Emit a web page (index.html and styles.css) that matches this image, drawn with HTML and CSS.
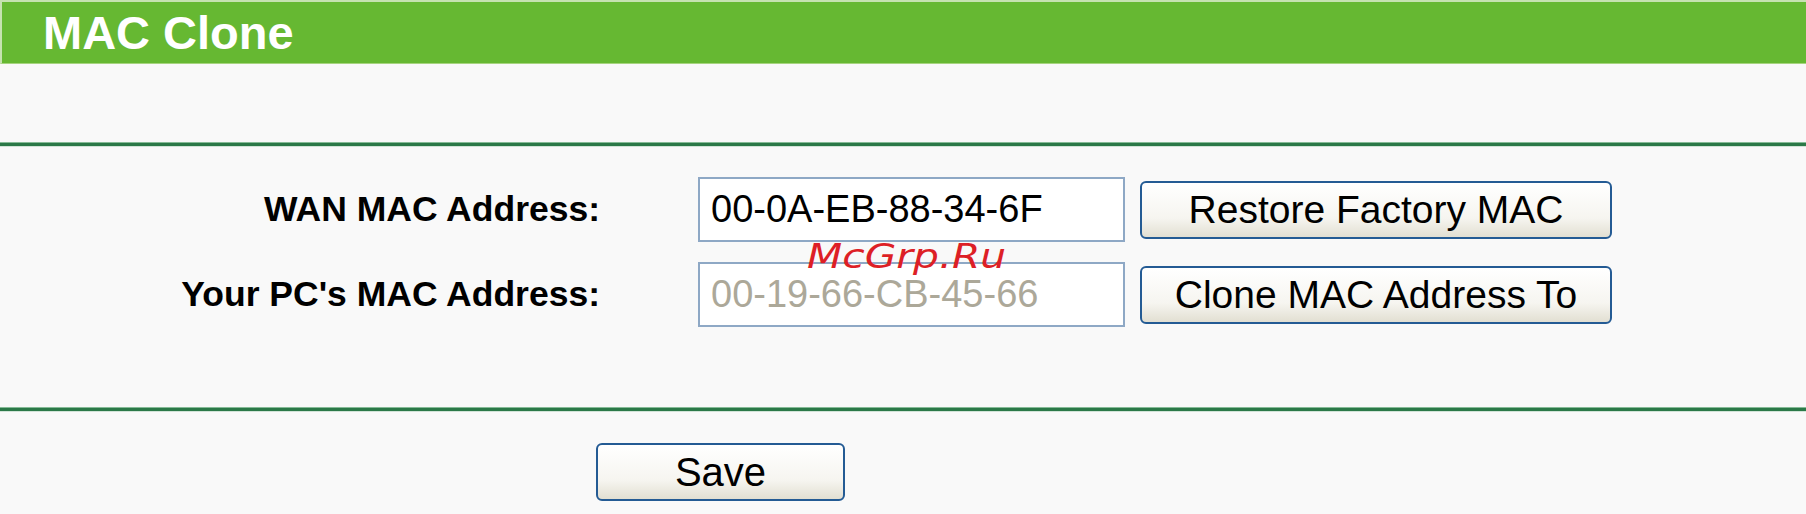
FILE: index.html
```html
<!DOCTYPE html>
<html lang="en">
<head>
    <meta charset="UTF-8">
    <meta name="viewport" content="width=device-width, initial-scale=1.0">
    <title>MAC Clone</title>
    <link rel="stylesheet" href="styles.css">
</head>
<body>
    <div class="title-bar">
        <h1>MAC Clone</h1>
    </div>
    <div class="spacer"></div>
    <hr class="rule">

    <form class="clone-form" onsubmit="event.preventDefault();">
        <div class="row">
            <label for="wan-mac">WAN MAC Address:</label>
            <input type="text" id="wan-mac" class="mac" value="00-0A-EB-88-34-6F">
            <button type="button" class="btn wide">Restore Factory MAC</button>
        </div>
        <div class="row">
            <label for="pc-mac">Your PC's MAC Address:</label>
            <input type="text" id="pc-mac" class="mac readonly" value="00-19-66-CB-45-66" readonly>
            <button type="button" class="btn wide">Clone MAC Address To</button>
        </div>
    </form>

    <hr class="rule">
    <div class="actions">
        <button type="submit" class="btn save">Save</button>
    </div>

    <div class="watermark">McGrp.Ru</div>
</body>
</html>
```

FILE: styles.css
```css
body {
    font-family: "Liberation Sans", Arial, sans-serif;
    background-color: #f9f9f9;
    margin: 0;
    padding: 0;
    position: relative;
    overflow: hidden;
}

.title-bar {
    height: 61px;
    background-color: #66b832;
    border-top: 2px solid #c6e2b0;
    border-left: 2px solid #c6e2b0;
    border-bottom: 1px solid #a6d47f;
    padding-left: 41px;
}

.title-bar h1 {
    margin: 0;
    font-size: 47px;
    line-height: 61px;
    font-weight: bold;
    color: #fff;
}

.spacer {
    height: 78px;
}

.rule {
    margin: 0;
    border: 0;
    height: 3px;
    background-color: #2b7948;
    border-top: 1px solid #86bb97;
    border-bottom: 1px solid #d2e4d8;
}

.clone-form {
    padding-top: 30px;
    padding-bottom: 80px;
    display: flex;
    flex-direction: column;
    gap: 20px;
}

.row {
    display: flex;
    align-items: center;
}

.row label {
    width: 600px;
    text-align: right;
    font-size: 35.5px;
    font-weight: bold;
    color: #000;
}

.mac {
    box-sizing: border-box;
    width: 427px;
    height: 65px;
    margin-left: 98px;
    padding: 0 0 0 11px;
    border: 2px solid #8ea8c5;
    background-color: #fff;
    font-family: "Liberation Sans", Arial, sans-serif;
    font-size: 38px;
    color: #000;
    outline: none;
}

.mac.readonly {
    color: #aca899;
}

.btn {
    box-sizing: border-box;
    height: 58px;
    border: 2px solid #245b94;
    border-radius: 6px;
    background: linear-gradient(#ffffff, #f6f5f0 65%, #e2dfd2);
    font-family: "Liberation Sans", Arial, sans-serif;
    font-size: 39px;
    color: #000;
    padding: 0;
    cursor: pointer;
}

.wide {
    width: 472px;
    margin-left: 15px;
}

.actions {
    padding-top: 31px;
    padding-left: 596px;
}

.save {
    width: 249px;
    font-size: 40px;
}

.watermark {
    position: absolute;
    left: 807px;
    top: 239px;
    font-family: "DejaVu Sans", sans-serif;
    font-style: italic;
    font-size: 34px;
    line-height: 34px;
    color: #dd1f26;
    transform: scaleX(1.2);
    transform-origin: left top;
    pointer-events: none;
}
```
